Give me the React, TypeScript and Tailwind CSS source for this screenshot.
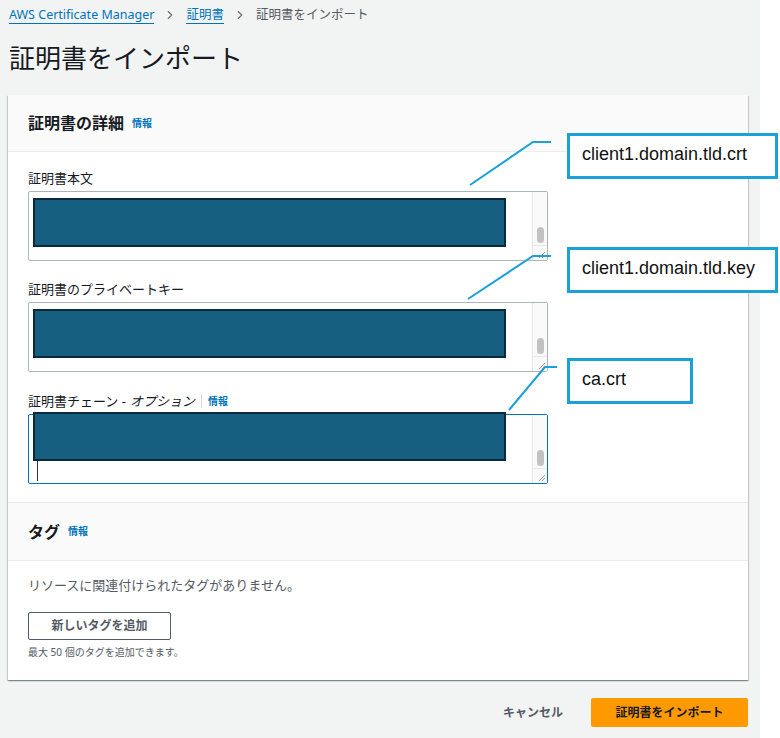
import { ChevronRight } from "lucide-react";

const font = { fontFamily: '"Noto Sans", "Noto Sans CJK JP", sans-serif' };

function FakeTextarea({ focused, caret }: { focused?: boolean; caret?: boolean }) {
  return (
    <div
      className={
        "relative h-[70px] w-[520px] rounded-[2px] bg-white " +
        (focused ? "border border-[#0073bb]" : "border border-[#aab7b8]")
      }
    >
      {/* scrollbar */}
      <div className="absolute right-0 top-0 bottom-0 w-[15px] border-l border-[#e8e8e8] bg-[#fafafa]">
        <div className="absolute left-[4px] top-[35px] h-[16px] w-[7px] rounded-full bg-[#c2c2c2]" />
        <div className="absolute bottom-0 left-0 h-[15px] w-[14px] border-t border-[#e8e8e8]">
          <svg width="14" height="14" viewBox="0 0 14 14" className="absolute bottom-0 right-0">
            <path d="M12 6 L6 12 M12 9 L9 12" stroke="#999" strokeWidth="1" />
          </svg>
        </div>
      </div>
      {caret && <div className="absolute left-[8px] top-[44px] h-[22px] w-px bg-[#333]" />}
    </div>
  );
}

function Redact({ top }: { top: number }) {
  return (
    <div
      className="absolute left-[33px] h-[49px] w-[473px] border-2 border-[#0b2a3b] bg-[#175f80]"
      style={{ top }}
    />
  );
}

function Callout({ top, width, text }: { top: number; width: number; text: string }) {
  return (
    <div
      className="absolute left-[567px] flex h-[46px] items-center border-[3px] border-[#1ba1d9] bg-white pb-[4px] pl-[12px] text-[18px] text-[#111]"
      style={{ top, width, fontFamily: '"Liberation Sans", Arial, sans-serif' }}
    >
      {text}
    </div>
  );
}

export default function App() {
  return (
    <div className="relative min-h-[738px] w-[780px] bg-white" style={font}>
      <div className="min-h-[738px] w-[760px] bg-[#f2f3f3] pl-[9px] pt-[6px]">
        {/* breadcrumb */}
        <div className="flex h-[18px] items-center text-[12.5px]">
          <span className="border-b border-[#0073bb] leading-[16px] text-[#0073bb]">AWS Certificate Manager</span>
          <ChevronRight className="mx-[9px] h-[14px] w-[14px] text-[#687078]" strokeWidth={2} />
          <span className="border-b border-[#0073bb] leading-[16px] text-[#0073bb]">証明書</span>
          <ChevronRight className="mx-[9px] h-[14px] w-[14px] text-[#687078]" strokeWidth={2} />
          <span className="text-[#545b64]">証明書をインポート</span>
        </div>
        <h1 className="mt-[18px] text-[26px] leading-[32px] font-normal text-[#16191f]">証明書をインポート</h1>

        {/* card */}
        <div className="mt-[21px] w-[740px] -ml-px bg-white shadow-[0_1px_1px_0_rgba(0,28,36,0.3),1px_1px_1px_0_rgba(0,28,36,0.15),-1px_1px_1px_0_rgba(0,28,36,0.15)]">
          <div className="flex h-[57px] items-center border-b border-[#eaeded] bg-[#fafafa] px-[20px]">
            <span className="text-[16px] font-bold text-[#16191f]">証明書の詳細</span>
            <span className="ml-[8px] text-[10px] font-bold text-[#0073bb]">情報</span>
          </div>
          <div className="px-[20px] pt-[17px] pb-[18px]">
            <div className="text-[13px] leading-[18px] text-[#16191f]">証明書本文</div>
            <div className="mt-[4px]">
              <FakeTextarea />
            </div>
            <div className="mt-[19px] text-[13px] leading-[18px] text-[#16191f]">証明書のプライベートキー</div>
            <div className="mt-[4px]">
              <FakeTextarea />
            </div>
            <div className="mt-[20px] flex items-center text-[13px] leading-[18px] text-[#16191f]">
              証明書チェーン - <span className="ml-[4px] italic">オプション</span>
              <span className="mx-[6px] h-[14px] w-px bg-[#d5dbdb]" />
              <span className="text-[10px] font-bold text-[#0073bb]">情報</span>
            </div>
            <div className="mt-[4px]">
              <FakeTextarea focused caret />
            </div>
          </div>
          <div className="flex h-[59px] items-center border-t border-b border-[#eaeded] bg-[#fafafa] px-[20px]">
            <span className="text-[16px] font-bold text-[#16191f]">タグ</span>
            <span className="ml-[8px] text-[10px] font-bold text-[#0073bb]">情報</span>
          </div>
          <div className="px-[20px] pt-[15px] pb-[21px]">
            <div className="text-[13px] leading-[18px] text-[#545b64]">リソースに関連付けられたタグがありません。</div>
            <button className="mt-[18px] flex h-[28px] w-[143px] items-center justify-center rounded-[2px] border border-[#545b64] bg-white text-[12px] font-bold text-[#545b64]">
              新しいタグを追加
            </button>
            <div className="mt-[5px] text-[10px] leading-[14px] text-[#545b64]">最大 50 個のタグを追加できます。</div>
          </div>
        </div>

        {/* footer */}
        <div className="mt-[18px] flex w-[739px] items-center justify-end">
          <span className="mr-[28px] text-[12px] font-bold text-[#545b64]">キャンセル</span>
          <button className="flex h-[29px] w-[157px] items-center justify-center rounded-[2px] bg-[#ff9900] text-[12px] font-bold text-[#16191f]">
            証明書をインポート
          </button>
        </div>
      </div>

      {/* redaction overlays */}
      <Redact top={198} />
      <Redact top={309} />
      <Redact top={412} />

      {/* annotation lines */}
      <svg className="pointer-events-none absolute left-0 top-0" width="780" height="738">
        <polyline points="470,185 533,142 551,142" fill="none" stroke="#1ba1d9" strokeWidth="2" />
        <polyline points="468,299 533,256 551,256" fill="none" stroke="#1ba1d9" strokeWidth="2" />
        <polyline points="509,410 545,367 557,367" fill="none" stroke="#1ba1d9" strokeWidth="2" />
      </svg>

      <Callout top={133} width={211} text="client1.domain.tld.crt" />
      <Callout top={247} width={211} text="client1.domain.tld.key" />
      <Callout top={358} width={126} text="ca.crt" />
    </div>
  );
}
